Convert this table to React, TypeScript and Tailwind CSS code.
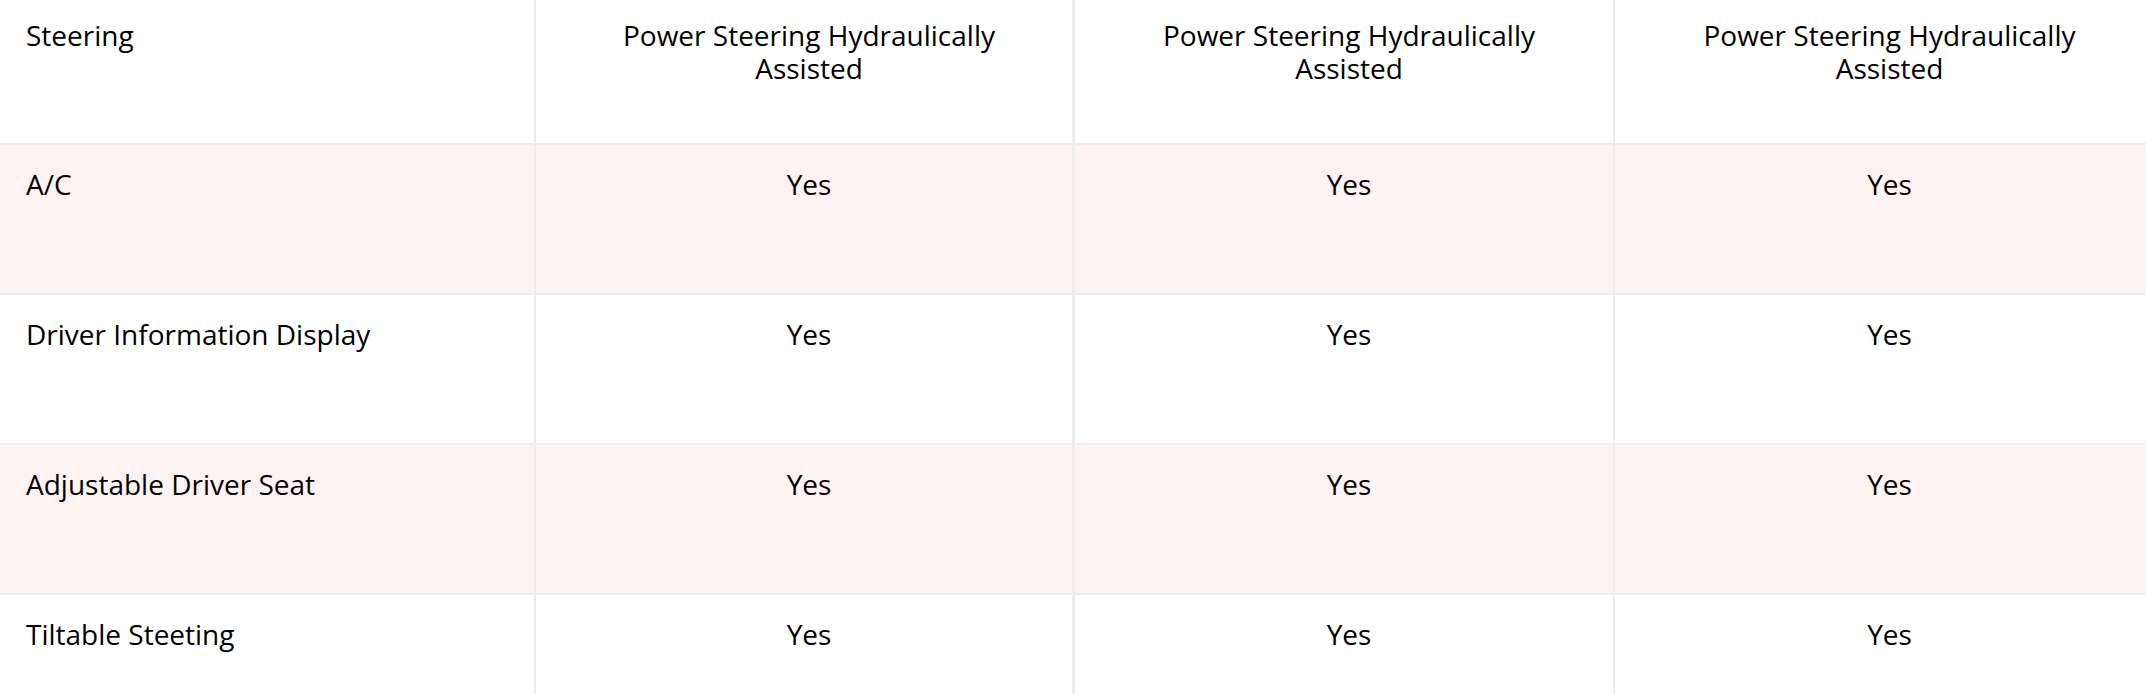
import React from 'react';

interface SpecRow {
  label: string;
  values: string[];
}

const header: SpecRow = {
  label: 'Steering',
  values: [
    'Power Steering Hydraulically Assisted',
    'Power Steering Hydraulically Assisted',
    'Power Steering Hydraulically Assisted',
  ],
};

const rows: SpecRow[] = [
  { label: 'A/C', values: ['Yes', 'Yes', 'Yes'] },
  { label: 'Driver Information Display', values: ['Yes', 'Yes', 'Yes'] },
  { label: 'Adjustable Driver Seat', values: ['Yes', 'Yes', 'Yes'] },
  { label: 'Tiltable Steeting', values: ['Yes', 'Yes', 'Yes'] },
];

// per-column classes for the three value columns
const valueCols = [
  'border-r-[3px] border-[#ededed] pl-[65px] pr-[55px]',
  'border-r-2 border-[#ededed] pl-[65px] pr-[55px]',
  'pl-[69px] pr-[51px]',
];

const SpecLine: React.FC<{ row: SpecRow; tinted?: boolean; isHead?: boolean }> = ({ row, tinted, isHead }) => {
  const pad = isHead ? 'pt-[19px]' : 'pt-[23px]';
  return (
    <div
      className={`grid grid-cols-[536px_539px_540px_1fr] border-b-2 border-[#ededed] ${tinted ? 'bg-[#fdf3f3]' : 'bg-white'} ${isHead ? 'h-[145px]' : 'h-[150px]'}`}
    >
      <div className={`border-r-2 border-[#ededed] pl-[26px] pr-4 ${pad}`}>{row.label}</div>
      {row.values.map((v, i) => (
        <div key={i} className={`text-center ${pad} ${valueCols[i]}`}>
          {v}
        </div>
      ))}
    </div>
  );
};

export default function App() {
  return (
    <div className="w-[2146px] h-[694px] overflow-hidden bg-white text-[28px] leading-[33px] text-black font-['Open_Sans',sans-serif]">
      <SpecLine row={header} isHead />
      {rows.map((r, i) => (
        <SpecLine key={r.label} row={r} tinted={i % 2 === 0} />
      ))}
    </div>
  );
}
